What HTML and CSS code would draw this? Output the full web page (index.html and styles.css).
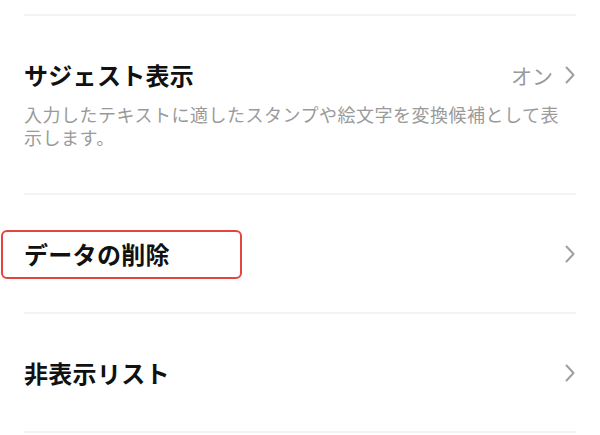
FILE: index.html
```html
<!DOCTYPE html>
<html lang="ja">
<head>
<meta charset="utf-8">
<link rel="stylesheet" href="styles.css">
</head>
<body>
<div class="list">
  <div class="divider top"></div>
  <div class="item item-suggest">
    <div class="row">
      <span class="title">サジェスト表示</span>
      <span class="value">オン<svg class="chev" viewBox="0 0 10 18" width="10" height="18"><polyline points="1.5,1.5 8.5,9 1.5,16.5" fill="none" stroke="#a0a0a0" stroke-width="2" stroke-linecap="round" stroke-linejoin="round"/></svg></span>
    </div>
    <p class="desc">入力したテキストに適したスタンプや絵文字を変換候補として表示します。</p>
  </div>
  <div class="divider"></div>
  <div class="item item-plain">
    <div class="row">
      <span class="title marked">データの削除</span>
      <svg class="chev" viewBox="0 0 10 18" width="10" height="18"><polyline points="1.5,1.5 8.5,9 1.5,16.5" fill="none" stroke="#a0a0a0" stroke-width="2" stroke-linecap="round" stroke-linejoin="round"/></svg>
    </div>
  </div>
  <div class="divider"></div>
  <div class="item item-plain">
    <div class="row">
      <span class="title">非表示リスト</span>
      <svg class="chev" viewBox="0 0 10 18" width="10" height="18"><polyline points="1.5,1.5 8.5,9 1.5,16.5" fill="none" stroke="#a0a0a0" stroke-width="2" stroke-linecap="round" stroke-linejoin="round"/></svg>
    </div>
  </div>
  <div class="divider"></div>
</div>
</body>
</html>
```
FILE: styles.css
```css
html, body {
  margin: 0;
  padding: 0;
  background: #ffffff;
}
body {
  font-family: "Noto Sans CJK JP", "Noto Sans", sans-serif;
  color: #111111;
  width: 600px;
  height: 435px;
  overflow: hidden;
}
.list {
  padding: 14px 24px 0 24px;
  display: flex;
  flex-direction: column;
}
.divider {
  height: 2px;
  background: #f3f3f3;
}
.item-suggest {
  padding: 43px 0 44px 0;
}
.item-plain {
  height: 117px;
  display: flex;
  flex-direction: column;
  justify-content: center;
}
.row {
  display: flex;
  align-items: center;
  justify-content: space-between;
  height: 32px;
}
.title {
  font-size: 24px;
  font-weight: 700;
  line-height: 32px;
  letter-spacing: 0.3px;
}
.value {
  display: flex;
  align-items: center;
  gap: 12px;
  color: #9a9a9a;
  font-size: 21px;
  line-height: 32px;
}
.chev {
  display: block;
  margin-right: 1px;
}
.desc {
  margin: 12px 0 0 0;
  font-size: 18px;
  line-height: 23px;
  letter-spacing: 0.5px;
  color: #9a9a9a;
  padding-right: 10px;
}
.marked {
  position: relative;
}
.marked::after {
  content: "";
  position: absolute;
  left: -23px;
  right: -72px;
  top: -8px;
  bottom: -9px;
  border: 2.5px solid #e4453d;
  border-radius: 6px;
}
```
